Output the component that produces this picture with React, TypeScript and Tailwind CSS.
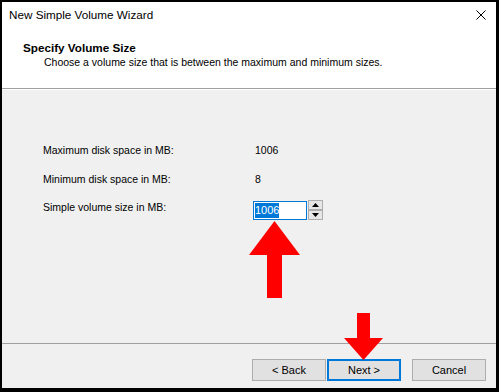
import { ReactNode } from 'react';

const FONT = { fontFamily: '"Liberation Sans", Arial, sans-serif' };

const WizardButton = ({ children, primary }: { children: ReactNode; primary?: boolean }) => (
  <button
    className={
      primary
        ? 'flex h-[22px] w-[74px] items-center justify-center border-2 border-[#0078d7] bg-[#e1e1e1] text-[11px] text-black'
        : 'flex h-[22px] w-[74px] items-center justify-center border border-[#adadad] bg-[#e1e1e1] text-[11px] text-black'
    }
  >
    {children}
  </button>
);

const SpinButton = ({ up }: { up?: boolean }) => (
  <div className="flex h-[10px] w-[15px] items-center justify-center border border-[#adadad] bg-[#e6e6e6]">
    <svg width="7" height="4" viewBox="0 0 7 4">
      {up ? <polygon points="3.5,0 7,4 0,4" fill="#000" /> : <polygon points="0,0 7,0 3.5,4" fill="#000" />}
    </svg>
  </div>
);

export default function App() {
  return (
    <div className="relative h-[392px] w-[499px] bg-black pb-[4px] pl-[2px] pr-[3px] pt-[2px]" style={FONT}>
      <div className="flex h-full flex-col bg-[#f0f0f0] text-black">
        {/* title bar + header */}
        <div className="bg-white">
          <div className="flex h-[25px] items-center justify-between pl-[7px] pr-[10px] text-[11.7px]">
            <span>New Simple Volume Wizard</span>
            <svg width="10" height="10" viewBox="0 0 10 10">
              <path d="M0.5 0.5 L9.5 9.5 M9.5 0.5 L0.5 9.5" stroke="#000" strokeWidth="1" />
            </svg>
          </div>
          <div className="h-[62px] border-b border-[#a0a0a0] pt-[13px] leading-[15px]">
            <div className="pl-[21px] text-[11.7px] font-bold">Specify Volume Size</div>
            <div className="pl-[42px] text-[10.5px]">Choose a volume size that is between the maximum and minimum sizes.</div>
          </div>
        </div>

        {/* body */}
        <div className="flex-1 border-t border-white pl-[41px] pt-[51px] text-[10.5px]">
          <div className="flex h-[20px] items-center">
            <span className="w-[212px]">Maximum disk space in MB:</span>
            <span>1006</span>
          </div>
          <div className="mt-[9px] flex h-[20px] items-center">
            <span className="w-[212px]">Minimum disk space in MB:</span>
            <span>8</span>
          </div>
          <div className="mt-[11px] flex items-start">
            <span className="mt-[-1px] w-[210px] leading-[15px]">Simple volume size in MB:</span>
            <div className="flex h-[19px] w-[54px] items-center border border-[#0078d7] bg-white pl-px">
              <span className="bg-[#0078d7] text-[11px] leading-[15px] text-white">1006</span>
            </div>
            <div className="ml-px mt-[-1px] flex flex-col">
              <SpinButton up />
              <SpinButton />
            </div>
          </div>
        </div>

        {/* footer */}
        <div className="flex h-[45px] justify-end gap-[11px] border-t border-[#a0a0a0] pr-[10px] pt-[15px]">
          <div className="flex gap-px">
            <WizardButton>&lt; Back</WizardButton>
            <WizardButton primary>Next &gt;</WizardButton>
          </div>
          <WizardButton>Cancel</WizardButton>
        </div>
      </div>

      {/* annotation arrows */}
      <svg className="absolute left-[249px] top-[221px]" width="51" height="78" viewBox="0 0 51 78">
        <polygon points="25.5,0 51,34 33,34 33,77 18,77 18,34 0,34" fill="#ff0000" />
      </svg>
      <svg className="absolute left-[344px] top-[313px]" width="40" height="48" viewBox="0 0 40 48">
        <polygon points="13,0 26,0 26,25 39,25 19.5,47 0,25 13,25" fill="#ff0000" />
      </svg>
    </div>
  );
}
